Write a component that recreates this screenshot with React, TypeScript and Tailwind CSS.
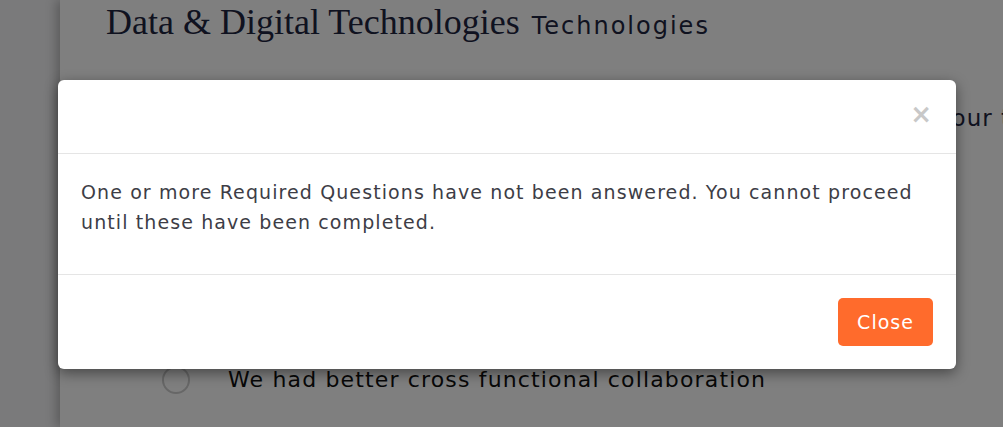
export default function App() {
  return (
    <div className="relative h-[427px] w-[1003px] overflow-hidden bg-white font-['DejaVu_Sans',sans-serif]">
      {/* Page behind the modal */}
      <div className="flex h-full">
        <aside className="w-[60px] shrink-0 bg-[#f4f4f6]" />
        <main className="flex-1 bg-white shadow-[-4px_0_10px_rgba(0,0,0,0.25)]">
          <h1 className="flex items-baseline gap-3 pl-[46px] text-[#1e2540]">
            <span className="font-['Liberation_Serif',serif] text-[36px] leading-[44px]">
              Data &amp; Digital Technologies
            </span>
            <span className="text-[24px] tracking-[2px]">Technologies</span>
          </h1>
          <p className="mt-[63px] pl-[877px] text-[23px] leading-none whitespace-nowrap text-[#1e2540] tracking-[1px]">
            your team
          </p>
          <div className="mt-[233px] flex items-center gap-[38px] pl-[102px]">
            <span className="h-[28px] w-[28px] rounded-full border-[2px] border-[#cfcfcf] bg-white" />
            <span className="text-[22px] tracking-[1.15px] text-[#111]">We had better cross functional collaboration</span>
          </div>
        </main>
      </div>

      {/* Backdrop */}
      <div className="absolute inset-0 bg-black/50" />

      {/* Modal */}
      <div className="absolute left-[58px] top-[80px] w-[898px] rounded-[6px] bg-white shadow-[0_4px_14px_rgba(0,0,0,0.45)]">
        <div className="flex h-[74px] items-center justify-end border-b border-[#e5e5e5] pr-[24px] pb-[6px]">
          <button className="text-[26px] font-bold leading-none text-[#c8c8c8]">×</button>
        </div>
        <div className="h-[121px] border-b border-[#e5e5e5] px-[23px] pt-[23px] text-[19px] leading-[30px] tracking-[1.1px] text-[#3d3d46]">
          One or more Required Questions have not been answered. You cannot proceed until these have been completed.
        </div>
        <div className="flex h-[94px] items-center justify-end pr-[23px]">
          <button className="h-[48px] w-[95px] rounded-[5px] bg-[#ff6b2c] text-[19px] tracking-[1px] text-white">Close</button>
        </div>
      </div>
    </div>
  );
}
